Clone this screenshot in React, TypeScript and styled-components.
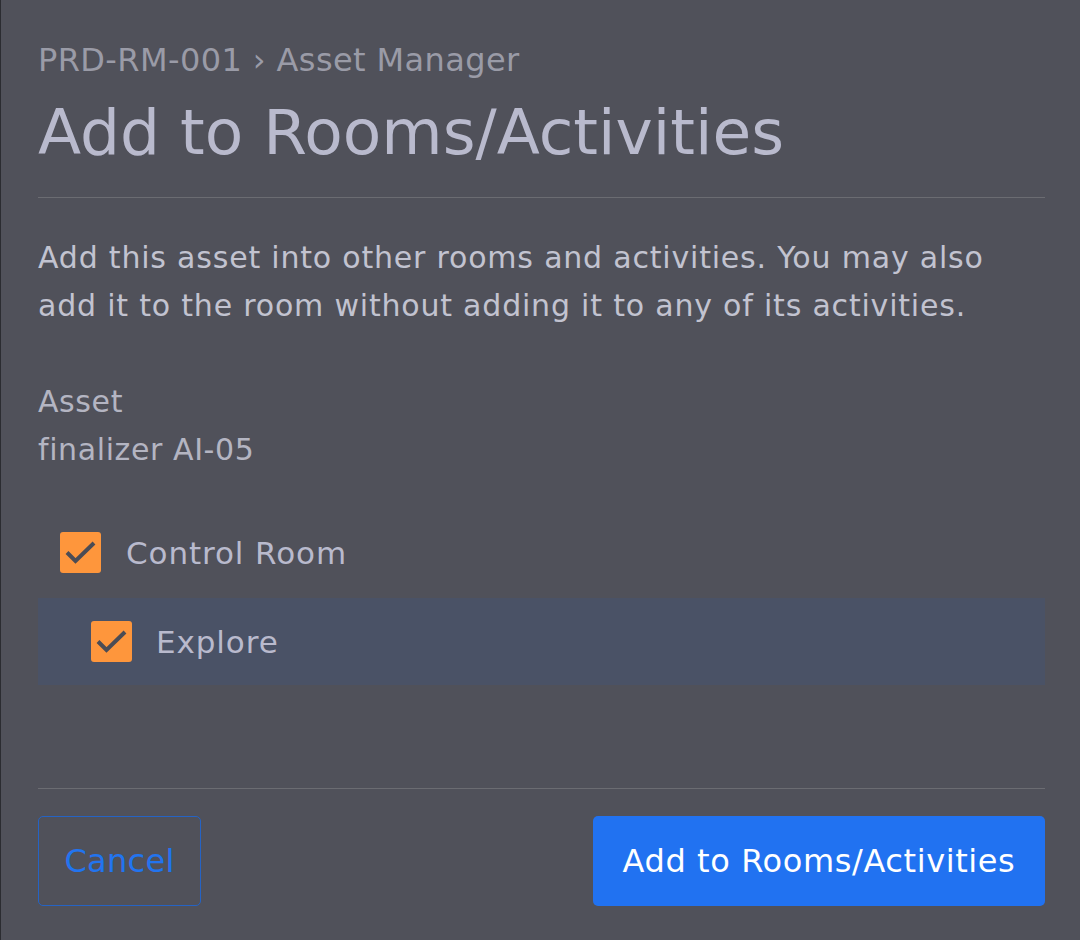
import React from "react";
import styled, { createGlobalStyle } from "styled-components";

interface IActivity {
  name: string;
  checked: boolean;
}

interface IRoom {
  name: string;
  checked: boolean;
  activities: IActivity[];
}

const rooms: IRoom[] = [
  {
    name: "Control Room",
    checked: true,
    activities: [{ name: "Explore", checked: true }],
  },
];

const GlobalStyle = createGlobalStyle`
  html, body {
    margin: 0;
    padding: 0;
    background-color: #50515a;
  }
  * {
    box-sizing: border-box;
  }
`;

const CheckBox: React.FC<{ checked: boolean }> = ({ checked }) => (
  <Box>
    {checked && (
      <svg width="41" height="41" viewBox="0 0 41 41">
        <polyline
          points="7,20.5 15.5,29 34,11"
          fill="none"
          stroke="#4b4c55"
          strokeWidth="4"
        />
      </svg>
    )}
  </Box>
);

export default function App() {
  return (
    <>
      <GlobalStyle />
      <Root>
        <Header>
          <Breadcrumb>PRD-RM-001 › Asset Manager</Breadcrumb>
          <Title>Add to Rooms/Activities</Title>
        </Header>
        <Body>
          <Description>
            Add this asset into other rooms and activities. You may also add it
            to the room without adding it to any of its activities.
          </Description>
          <AssetBlock>
            <AssetLabel>Asset</AssetLabel>
            <AssetValue>finalizer AI-05</AssetValue>
          </AssetBlock>
          <RoomList>
            {rooms.map((room) => (
              <React.Fragment key={room.name}>
                <RoomRow>
                  <CheckBox checked={room.checked} />
                  <RowLabel>{room.name}</RowLabel>
                </RoomRow>
                {room.activities.map((activity) => (
                  <ActivityRow key={activity.name}>
                    <CheckBox checked={activity.checked} />
                    <RowLabel>{activity.name}</RowLabel>
                  </ActivityRow>
                ))}
              </React.Fragment>
            ))}
          </RoomList>
        </Body>
        <Footer>
          <CancelButton>Cancel</CancelButton>
          <SubmitButton>Add to Rooms/Activities</SubmitButton>
        </Footer>
      </Root>
    </>
  );
}

const Root = styled.div`
  width: 1080px;
  height: 940px;
  background-color: #50515a;
  border-left: 1px solid #2b2c31;
  padding: 0 35px 0 37px;
  display: flex;
  flex-direction: column;
  font-family: "DejaVu Sans", "Liberation Sans", sans-serif;
`;
const Header = styled.div`
  padding-top: 38px;
  padding-bottom: 13px;
  border-bottom: 1px solid #6b6c72;
`;
const Breadcrumb = styled.div`
  font-size: 32px;
  line-height: 44px;
  letter-spacing: 0.4px;
  color: #9a9ba7;
`;
const Title = styled.h1`
  margin: 0;
  font-size: 63px;
  line-height: 102px;
  font-weight: 400;
  color: #b9bacd;
`;
const Body = styled.div`
  flex: 1;
  padding-top: 36px;
`;
const Description = styled.p`
  margin: 0;
  font-size: 30px;
  line-height: 48px;
  letter-spacing: 0.8px;
  color: #c2c3d0;
`;
const AssetBlock = styled.div`
  margin-top: 48px;
`;
const AssetLabel = styled.div`
  font-size: 30px;
  line-height: 48px;
  letter-spacing: 0.6px;
  color: #b4b5c2;
`;
const AssetValue = styled(AssetLabel)``;
const RoomList = styled.div`
  margin-top: 36px;
  display: flex;
  flex-direction: column;
`;
const RoomRow = styled.div`
  display: flex;
  align-items: center;
  gap: 25px;
  height: 85px;
  margin-bottom: 3px;
  padding-left: 22px;
`;
const ActivityRow = styled(RoomRow)`
  height: 87px;
  margin-bottom: 0;
  padding-left: 53px;
  gap: 24px;
  background-color: #4a5266;
`;
const Box = styled.span`
  width: 41px;
  height: 41px;
  flex-shrink: 0;
  border-radius: 3px;
  background-color: #fe963c;
  display: flex;
`;
const RowLabel = styled.span`
  font-size: 31px;
  letter-spacing: 0.9px;
  color: #b9bacd;
`;
const Footer = styled.div`
  border-top: 1px solid #6b6c72;
  padding: 27px 0 34px;
  display: flex;
  justify-content: space-between;
`;
const CancelButton = styled.button`
  width: 163px;
  height: 90px;
  border: 1px solid #2563c4;
  border-radius: 5px;
  background: transparent;
  color: #2274ef;
  font-family: inherit;
  font-size: 32px;
  letter-spacing: 0.3px;
`;
const SubmitButton = styled.button`
  width: 452px;
  height: 90px;
  border: none;
  border-radius: 5px;
  background-color: #2172f1;
  color: #ffffff;
  font-family: inherit;
  font-size: 32px;
  letter-spacing: 0.6px;
`;
